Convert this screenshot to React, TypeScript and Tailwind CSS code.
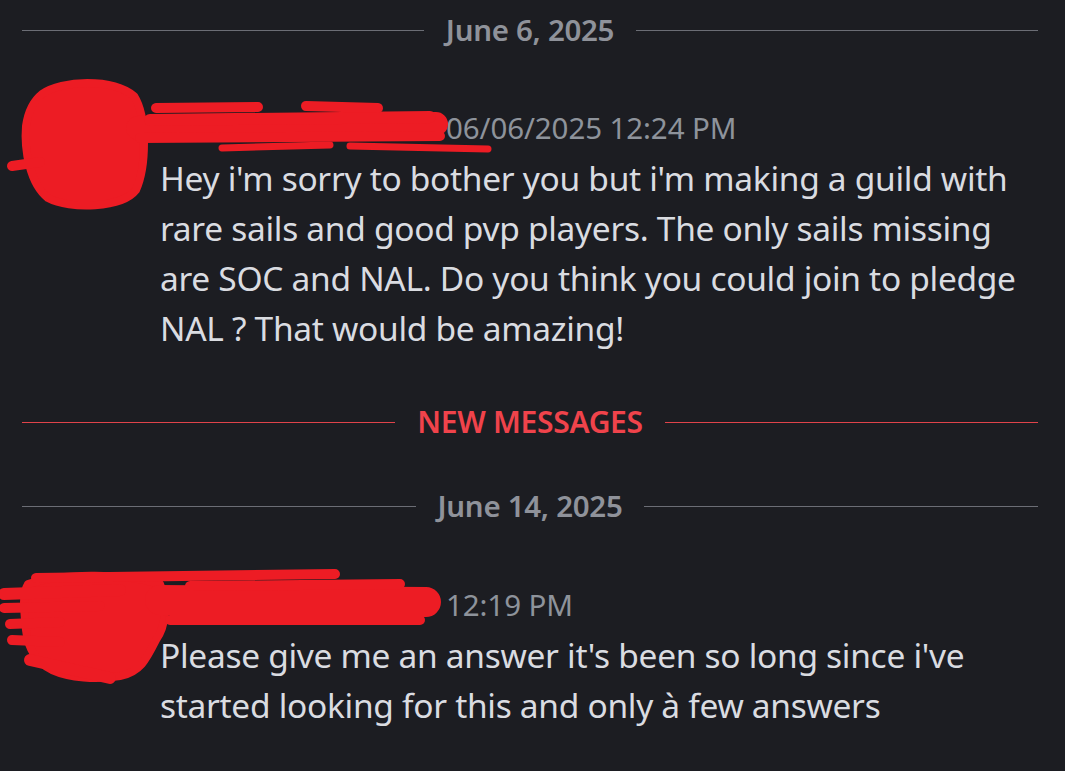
import React from "react";

const font = { fontFamily: '"Noto Sans", "Open Sans", sans-serif' };

function Divider({ label, red }: { label: string; red?: boolean }) {
  return (
    <div className="flex items-center h-[36px]">
      <div className={`flex-1 h-px ${red ? "bg-[#e0434a]" : "bg-[#6b6d75]"}`} />
      <span
        className={`px-[22px] leading-none tracking-[-0.3px] ${
          red ? "text-[30px] font-semibold text-[#f0434b]" : "text-[29.5px] font-semibold text-[#8f929a]"
        }`}
      >
        {label}
      </span>
      <div className={`flex-1 h-px ${red ? "bg-[#e0434a]" : "bg-[#6b6d75]"}`} />
    </div>
  );
}

function Message({ time, lines, mt }: { time: string; lines: string[]; mt: string }) {
  return (
    <div className={`flex ${mt}`}>
      <div className="w-[138px] shrink-0 pl-[14px]">
        <div className="w-[91px] h-[91px] rounded-full bg-[#5865f2] mt-[4px]" />
      </div>
      <div className="flex flex-col">
        <div className="flex items-center h-[50px]">
          <div className="w-[286px] shrink-0" />
          <span className="text-[29.5px] text-[#8e939b] tracking-[-0.1px]">{time}</span>
        </div>
        <div className="text-[33.5px] leading-[50px] text-[#dadce1] tracking-[-0.3px]">
          {lines.map((l, i) => (
            <div key={i}>{l}</div>
          ))}
        </div>
      </div>
    </div>
  );
}

export default function App() {
  return (
    <div className="relative w-[1065px] h-[771px] overflow-hidden bg-[#1c1d22]" style={font}>
      <div className="flex flex-col pl-[22px] pr-[27px] pt-[12px]">
        <Divider label="June 6, 2025" />
        <Message
          mt="mt-[55px]"
          time="06/06/2025 12:24 PM"
          lines={[
            "Hey i'm sorry to bother you but i'm making a guild with",
            "rare sails and good pvp players. The only sails missing",
            "are SOC and NAL. Do you think you could join to pledge",
            "NAL ? That would be amazing!",
          ]}
        />
        <div className="mt-[51px]">
          <Divider label="NEW MESSAGES" red />
        </div>
        <div className="mt-[48px]">
          <Divider label="June 14, 2025" />
        </div>
        <Message
          mt="mt-[56px]"
          time="12:19 PM"
          lines={[
            "Please give me an answer it's been so long since i've",
            "started looking for this and only à few answers",
          ]}
        />
      </div>

      {/* red scribbles over name + avatar */}
      <svg className="absolute left-0 top-0" width="1065" height="771" viewBox="0 0 1065 771">
        <g stroke="#ed1c24" fill="none" strokeLinecap="round" strokeLinejoin="round">
          <path
            d="M42 94 C62 80 112 78 134 96 C148 118 146 168 136 190 C122 208 70 210 48 198 C30 184 24 150 26 126 C28 112 32 102 42 94 Z"
            fill="#ed1c24"
            strokeWidth="8"
          />
          <path d="M12 166 L40 162" strokeWidth="10" />
          <path d="M138 128 L436 124" strokeWidth="24" />
          <path d="M150 120 L430 117" strokeWidth="12" />
          <path d="M156 108 L258 107" strokeWidth="10" />
          <path d="M306 106 L378 108" strokeWidth="10" />
          <path d="M140 138 L440 136" strokeWidth="10" />
          <path d="M350 146 L488 149" strokeWidth="7" />
          <path d="M222 148 L330 145" strokeWidth="7" />

          <path
            d="M28 584 C60 574 120 572 160 584 C168 604 166 626 156 640 C146 660 140 672 120 676 C96 680 70 678 52 670 C36 662 28 648 26 630 C24 610 22 594 28 584 Z"
            fill="#ed1c24"
            strokeWidth="8"
          />
          <path d="M4 594 L120 590" strokeWidth="12" />
          <path d="M4 608 L100 606" strokeWidth="10" />
          <path d="M10 624 L60 622" strokeWidth="10" />
          <path d="M12 640 L60 642" strokeWidth="10" />
          <path d="M36 578 L335 574" strokeWidth="10" />
          <path d="M160 600 L426 602" strokeWidth="30" />
          <path d="M170 620 L420 620" strokeWidth="10" />
          <path d="M190 586 L400 584" strokeWidth="10" />
          <path d="M30 660 L110 678" strokeWidth="12" />
        </g>
      </svg>
    </div>
  );
}
